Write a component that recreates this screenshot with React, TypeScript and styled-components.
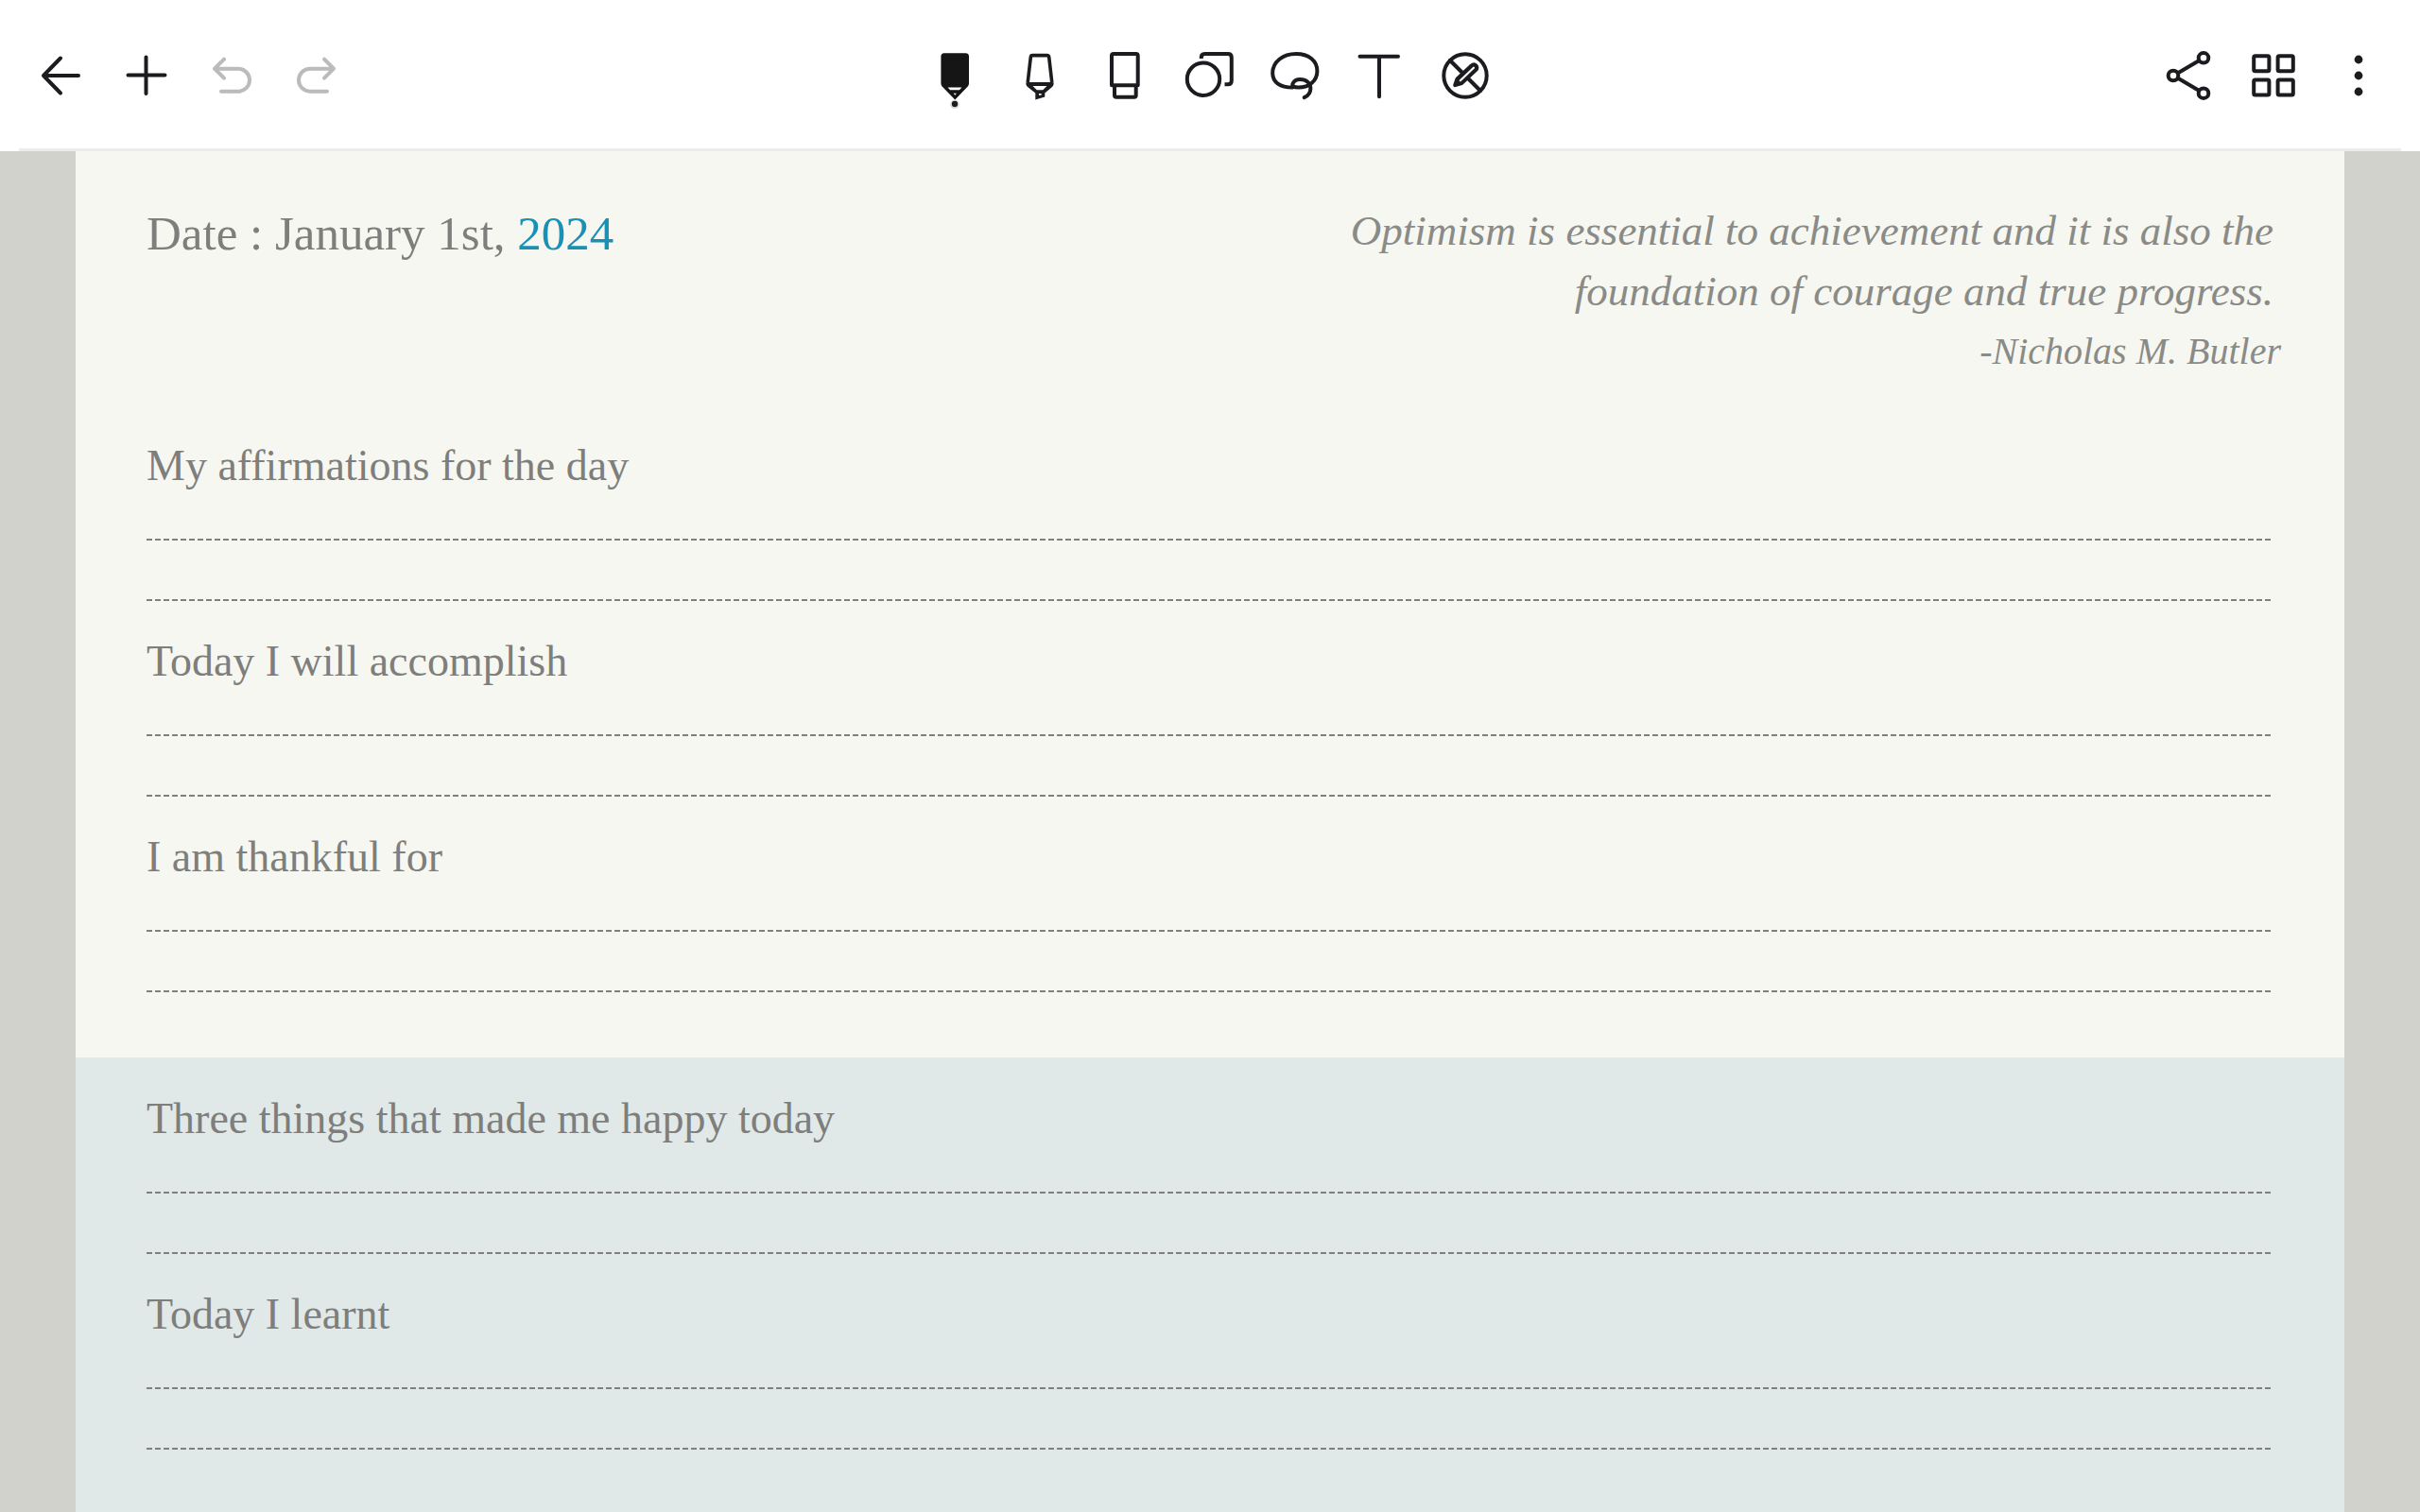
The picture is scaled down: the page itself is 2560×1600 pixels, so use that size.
import React from "react";
import styled, { createGlobalStyle } from "styled-components";

const INK = "#1c1b1f";

const GlobalStyle = createGlobalStyle`
  *, *::before, *::after { box-sizing: border-box; }
  body {
    margin: 0;
    background: #d1d2cc;
    font-family: "Liberation Serif", "Times New Roman", serif;
  }
`;

const Screen = styled.div`
  display: flex;
  flex-direction: column;
  height: 100vh;
  overflow: hidden;
`;

const TopBar = styled.header`
  flex: none;
  padding: 0 20px;
  background: #ffffff;
`;

const Toolbar = styled.div`
  display: grid;
  grid-template-columns: 1fr auto 1fr;
  height: 160px;
  box-shadow: inset 0 -3px 0 #ececec;
`;

const ToolGroup = styled.div<{ $end?: boolean }>`
  display: flex;
  justify-content: ${(p) => (p.$end ? "flex-end" : "flex-start")};
`;

const ToolButton = styled.button`
  display: flex;
  align-items: center;
  justify-content: center;
  width: 90px;
  padding: 0;
  border: 0;
  background: transparent;
  color: ${INK};

  &:disabled {
    color: #bbbbbb;
  }
`;

const Glyph = styled.svg`
  display: block;
  width: 60px;
  height: 70px;
  fill: none;
  stroke: currentColor;
  stroke-width: 4;
  stroke-linecap: round;
  stroke-linejoin: round;
`;

const Paper = styled.main`
  flex: 1;
  display: flex;
  flex-direction: column;
  min-height: 0;
  margin: 0 80px;
  background: #f6f7f1;
`;

const PageHead = styled.div`
  display: flex;
  justify-content: space-between;
  align-items: flex-start;
  padding: 52px 67px 57px 75px;
`;

const DateLine = styled.h1`
  margin: 0;
  font-size: 51px;
  line-height: 70px;
  font-weight: 400;
  color: #7e7e7c;
`;

const Year = styled.span`
  color: #1a90b5;
`;

const Quote = styled.figure`
  margin: 0;
  text-align: right;
  font-style: italic;
  line-height: 64px;
  color: #8a8b87;
`;

const QuoteText = styled.blockquote`
  margin: 0;
  padding-right: 8px;
  font-size: 45px;
`;

const Author = styled.figcaption`
  font-size: 40px;
`;

const Section = styled.section<{ $tinted?: boolean }>`
  flex: ${(p) => (p.$tinted ? "1" : "none")};
  display: flex;
  flex-direction: column;
  gap: 32px;
  padding: ${(p) => (p.$tinted ? "33px" : "0")} 78px 69px 75px;
  background: ${(p) => (p.$tinted ? "#e0e9e8" : "transparent")};
`;

const Prompt = styled.h2`
  margin: 0 0 45px;
  font-size: 46px;
  line-height: 64px;
  font-weight: 400;
  color: #7e7e7c;
`;

const Rules = styled.div`
  display: flex;
  flex-direction: column;
  gap: 62px;
`;

const Rule = styled.div`
  height: 2px;
  background: repeating-linear-gradient(
    to right,
    #7f807b 0 6px,
    transparent 6px 9px
  );
`;

function Icon({ children }: { children: React.ReactNode }) {
  return (
    <Glyph viewBox="0 -5 60 70" aria-hidden="true">
      {children}
    </Glyph>
  );
}

type Tool = { label: string; art: React.ReactNode; disabled?: boolean };

const leftTools: Tool[] = [
  { label: "Back", art: <path d="M29 11.5 11 30l18 18.5M11 30h37" /> },
  { label: "Add", art: <path d="M10.5 29.5h39M29.5 10.5v38.5" /> },
  {
    label: "Undo",
    disabled: true,
    art: <path d="M22 12.7l-10 10 10 10M13 22.7h24a12 12 0 0 1 0 24H19" />,
  },
  {
    label: "Redo",
    disabled: true,
    art: <path d="M38 12.7l10 10-10 10M47 22.7H23a12 12 0 0 0 0 24h18" />,
  },
];

const drawTools: Tool[] = [
  {
    label: "Pen",
    art: (
      <>
        <path
          d="M19 6.3h22.5a3.5 3.5 0 0 1 3.5 3.5v28.5q0 1.6-1 3L30.3 55.5 16.4 41.3q-1-1.4-1-3V9.8a3.5 3.5 0 0 1 3.6-3.5z"
          fill="#151516"
          stroke="none"
        />
        <path d="M22.5 42.4h15l-2.6 2.9h-9.8z" fill="#fff" stroke="none" />
        <path d="M28.6 48.8h3.2l-1.6 2z" fill="#fff" stroke="none" />
        <circle cx="30" cy="60.5" r="5" fill="#000" fillOpacity="0.12" stroke="none" />
        <circle cx="30" cy="60" r="3.2" fill={INK} stroke="none" />
      </>
    ),
  },
  {
    label: "Highlighter",
    art: (
      <>
        <path
          strokeWidth="3.6"
          d="M22.4 8.6h15.2q1.9 0 2.1 1.9l3.1 26.9q.2 1.3-1 1.3H18.2q-1.2 0-1-1.3l3.1-26.9q.2-1.9 2.1-1.9z"
        />
        <path
          d="M15.5 38.5h29q.2 2-1.2 3.300L35.300 48.500v4L25.300 55.500v-7L16.800 41.800q-1.500-1.300-1.300-3.300z"
          fill={INK}
          stroke="none"
        />
        <path d="M22.500 41h15l-4.300 4.300h-6.400z" fill="#fff" stroke="none" />
        <path d="M29 49h2.600v1.700h-2.600z" fill="#fff" stroke="none" />
      </>
    ),
  },
  {
    label: "Eraser",
    art: (
      <>
        <path d="M16 40.2V9a2 2 0 0 1 2-2h23.7a2 2 0 0 1 2 2v31.2z" />
        <path d="M19 41v9.7a2 2 0 0 0 2 2h18.7a2 2 0 0 0 2-2V41" />
      </>
    ),
  },
  {
    label: "Shapes",
    art: (
      <>
        <circle cx="23" cy="33.7" r="17.2" />
        <path strokeLinecap="butt" d="M20.8 12v-1.2q0-3.7 3.7-3.7h24.5q3.8 0 3.8 3.8v24.5q0 3.8-3.8 3.8h-3.5" />
      </>
    ),
  },
  {
    label: "Lasso",
    art: (
      <path d="M27.5 42.6C14 42.6 6.2 37 6.2 27.3 6.2 15.5 17 7 31 7c13.5 0 22.4 7.300 22.4 18.300C53.400 35.600 45 42.600 33.500 42.600c-5 0-7.200-1.600-5.800-4.400 1.300-2.600 4.300-4.100 7.600-4.100 6.700 0 11.100 3.900 11.100 9.400 0 4.300-2.900 8-6.700 9.700" />
    ),
  },
  { label: "Text", art: <path d="M8.500 9.700h40.500M29 9.700v42.600" /> },
  {
    label: "Drawing off",
    art: (
      <>
        <circle cx="30" cy="30" r="22.700" />
        <path d="M14 14l32 32" />
        <path
          d="M19.200 40.200l2.300-6.700L36.800 19.300a3.100 3.100 0 0 1 4.600 4.600L26.200 38z"
          fill={INK}
        />
        <path d="M24.800 35.300L38.900 21.700" stroke="#fff" strokeWidth="2.200" />
      </>
    ),
  },
];

const rightTools: Tool[] = [
  {
    label: "Share",
    art: (
      <>
        <circle cx="14" cy="30" r="5.300" />
        <circle cx="46" cy="11.300" r="5.300" />
        <circle cx="46" cy="48.700" r="5.300" />
        <path d="M19 27.200l22-13M19 32.800l22 13" />
      </>
    ),
  },
  {
    label: "Pages",
    art: (
      <>
        <rect x="9.200" y="9.200" width="16.200" height="16" rx="1.500" />
        <rect x="34.600" y="9.200" width="16.200" height="16" rx="1.500" />
        <rect x="9.200" y="34.500" width="16.200" height="16" rx="1.500" />
        <rect x="34.600" y="34.500" width="16.200" height="16" rx="1.500" />
      </>
    ),
  },
  {
    label: "More options",
    art: (
      <g fill={INK} stroke="none">
        <circle cx="30" cy="13" r="4.400" />
        <circle cx="30" cy="30" r="4.400" />
        <circle cx="30" cy="47" r="4.400" />
      </g>
    ),
  },
];

function Tools({ items, end }: { items: Tool[]; end?: boolean }) {
  return (
    <ToolGroup $end={end}>
      {items.map((t) => (
        <ToolButton key={t.label} type="button" aria-label={t.label} disabled={t.disabled}>
          <Icon>{t.art}</Icon>
        </ToolButton>
      ))}
    </ToolGroup>
  );
}

function Entry({ title }: { title: string }) {
  return (
    <div>
      <Prompt>{title}</Prompt>
      <Rules>
        <Rule />
        <Rule />
      </Rules>
    </div>
  );
}

const morning = ["My affirmations for the day", "Today I will accomplish", "I am thankful for"];
const evening = ["Three things that made me happy today", "Today I learnt"];

export default function App() {
  return (
    <Screen>
      <GlobalStyle />
      <TopBar>
        <Toolbar>
          <Tools items={leftTools} />
          <Tools items={drawTools} />
          <Tools items={rightTools} end />
        </Toolbar>
      </TopBar>
      <Paper>
        <PageHead>
          <DateLine>
            Date : January 1st, <Year>2024</Year>
          </DateLine>
          <Quote>
            <QuoteText>
              Optimism is essential to achievement and it is also the
              <br />
              foundation of courage and true progress.
            </QuoteText>
            <Author>-Nicholas M. Butler</Author>
          </Quote>
        </PageHead>
        <Section>
          {morning.map((t) => (
            <Entry key={t} title={t} />
          ))}
        </Section>
        <Section $tinted>
          {evening.map((t) => (
            <Entry key={t} title={t} />
          ))}
        </Section>
      </Paper>
    </Screen>
  );
}
